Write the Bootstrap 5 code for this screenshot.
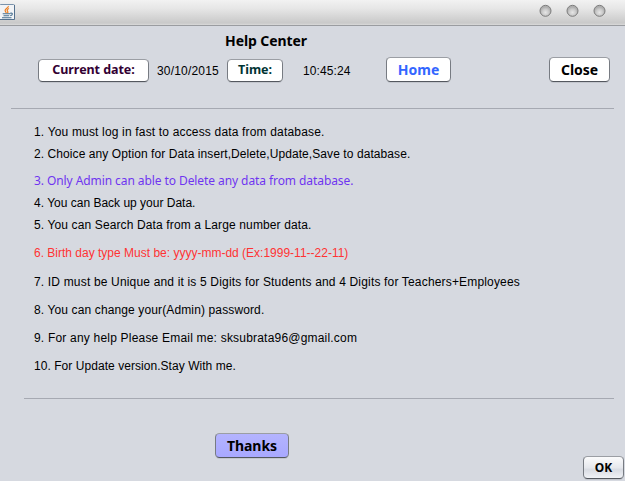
<!DOCTYPE html>
<html lang="en">
<head>
<meta charset="utf-8">
<meta name="viewport" content="width=device-width, initial-scale=1">
<title>Help Center</title>
<link rel="stylesheet" href="https://cdn.jsdelivr.net/npm/bootstrap@5.3.0/dist/css/bootstrap.min.css">
<style>
body{background:#d6d9e0;font:12px/22px "Liberation Sans",Arial,sans-serif;color:#000;height:481px;overflow:hidden}
.titlebar{height:26px;background:linear-gradient(#f2f2f2,#e6e6e6 35%,#c9c9c9 92%,#dadada);border-bottom:1px solid #9a9ca0;padding-right:19px}
.orbs{gap:14px;padding-top:4px}
.heading{font:bold 14px/20px "Noto Sans",sans-serif;letter-spacing:-.08px;height:31px;padding:5px 0 0 225px}
.nimbus{--bs-btn-padding-x:0;--bs-btn-padding-y:0;font-family:"Noto Sans",sans-serif;font-weight:700;line-height:1;border-radius:4.5px;background:#fff;border:1px solid #777b82;border-top-color:#9b9ea4;border-bottom-color:#54585f;box-shadow:0 1px 0 #c3c6cd;display:flex;align-items:center;justify-content:center;flex:none;height:25px;font-size:14px;white-space:nowrap;color:#000}
.nimbus.tag{height:23px;font-size:12.5px;margin-top:2px}
.date{width:111px;color:#330033;letter-spacing:-.05px}
.time{width:56px;color:#003333}
.stamp{padding-top:3px}
.stamp-date{width:62px;margin:0 8px;letter-spacing:.19px;white-space:nowrap}
.stamp-time{width:62px;margin-left:20px;letter-spacing:.1px}
.home{width:65px;color:#3366ff;margin-left:21px}
.close-btn{width:61px;letter-spacing:-.05px}
.thanks{width:74px;height:25px;background:linear-gradient(#b4b4ff,#a8a8ff);margin-left:215px;letter-spacing:-.05px}
.ok{width:41px;height:23px;font-size:12px;background:linear-gradient(#fbfbfc,#e6e8ed 50%,#d9dce3 60%,#f0f2f6);margin-top:23px}
.toolbar{height:51px;padding:0 15px 0 38px}
.rule{height:1px;background:#a6a9b2;margin:0 11px}
.rule-low{margin-left:24px}
.actions{padding:34px 1px 0 0}
.tips{margin:12px 0 21px 34px}
.tips li{white-space:nowrap}
.tips .g5{margin-top:5px}.tips .g6{margin-top:6px}.tips .g7{margin-top:7px}
.t1{letter-spacing:.05px}.t2{letter-spacing:.08px}.t3{letter-spacing:.125px}.t4{letter-spacing:.17px}.t5{letter-spacing:.2px}
.violet{color:#6f35f0;font-family:"Noto Sans",sans-serif;letter-spacing:-.08px}
.red{color:#ff3333}
</style>
<script defer src="https://cdn.jsdelivr.net/npm/bootstrap@5.3.0/dist/js/bootstrap.bundle.min.js"></script>
</head>
<body>
<header class="titlebar d-flex justify-content-between align-items-start">
<svg width="16" height="22" viewBox="0 0 16 22"><rect x="-.5" y="4.500" width="15" height="15" rx="1" fill="#f1f3f6" stroke="#7992ab"/><path d="M0 19.500h14.500V5" fill="none" stroke="#54718e"/><path d="M8.300 6c.7 2-3.400 2.500-3.200 4.500.1 1.200 1.300 1.500 1.100 2.700M9 8.500c-2.500 1-2 2-1.200 3 .4.600 0 1.200-.5 1.700" fill="none" stroke="#ef7d1c" stroke-width="1.200"/><path d="M2.700 13.700h7.500M3.500 15.700h5.700M2 17.700h9.500M10.200 13.200c3-.7 2.800 2 0 2.500" fill="none" stroke="#48708f" stroke-width="1.100"/></svg>
<div class="orbs d-flex">
<svg width="13" height="13" viewBox="0 0 13 13"><defs><radialGradient id="orb" cy=".65"><stop stop-color="#e6e6e6"/><stop offset=".6" stop-color="#cacaca"/><stop offset="1" stop-color="#adadad"/></radialGradient></defs><circle cx="6.500" cy="6.800" r="5.500" fill="url(#orb)" stroke="#7c7c7c"/></svg>
<svg width="13" height="13" viewBox="0 0 13 13"><circle cx="6.500" cy="6.800" r="5.500" fill="url(#orb)" stroke="#7c7c7c"/></svg>
<svg width="13" height="13" viewBox="0 0 13 13"><circle cx="6.500" cy="6.800" r="5.500" fill="url(#orb)" stroke="#7c7c7c"/></svg>
</div>
</header>
<main>
<h1 class="heading m-0">Help Center</h1>
<div class="toolbar d-flex align-items-start">
<span class="btn nimbus tag date">Current date:</span>
<span class="stamp stamp-date">30/10/2015</span>
<span class="btn nimbus tag time">Time:</span>
<span class="stamp stamp-time">10:45:24</span>
<button class="btn nimbus home" type="button">Home</button>
<button class="btn nimbus close-btn ms-auto" type="button">Close</button>
</div>
<div class="rule"></div>
<ol class="tips list-unstyled">
<li class="t4">1. You must log in fast to access data from database.</li>
<li class="t2">2. Choice any Option for Data insert,Delete,Update,Save to database.</li>
<li class="g5 violet">3. Only Admin can able to Delete any data from database.</li>
<li>4. You can Back up your Data.</li>
<li class="t3">5. You can Search Data from a Large number data.</li>
<li class="g6 red">6. Birth day type Must be: yyyy-mm-dd (Ex:1999-11--22-11)</li>
<li class="g7 t4">7. ID must be Unique and it is 5 Digits for Students and 4 Digits for Teachers+Employees</li>
<li class="g6 t3">8. You can change your(Admin) password.</li>
<li class="g6 t5">9. For any help Please Email me: sksubrata96@gmail.com</li>
<li class="g6 t1">10. For Update version.Stay With me.</li>
</ol>
<div class="rule rule-low"></div>
<div class="actions d-flex justify-content-between align-items-start">
<button class="btn nimbus thanks" type="button">Thanks</button>
<button class="btn nimbus ok" type="button">OK</button>
</div>
</main>
</body>
</html>
